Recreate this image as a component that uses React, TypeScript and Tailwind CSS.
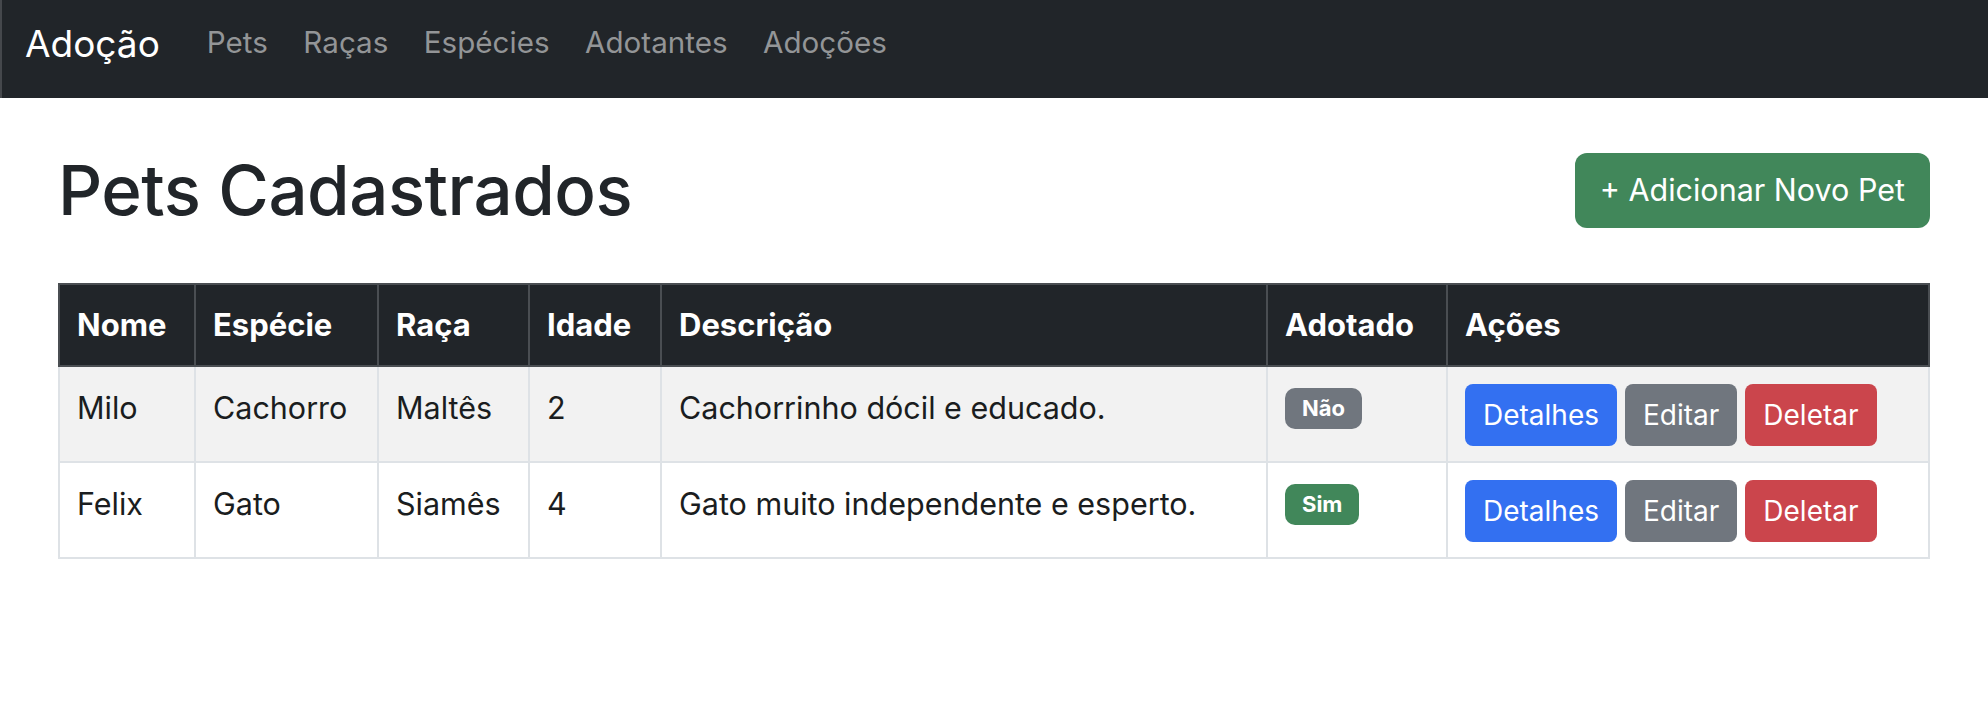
type Pet = {
  nome: string;
  especie: string;
  raca: string;
  idade: number;
  descricao: string;
  adotado: boolean;
};

const pets: Pet[] = [
  { nome: 'Milo', especie: 'Cachorro', raca: 'Maltês', idade: 2, descricao: 'Cachorrinho dócil e educado.', adotado: false },
  { nome: 'Felix', especie: 'Gato', raca: 'Siamês', idade: 4, descricao: 'Gato muito independente e esperto.', adotado: true },
];

const navLinks = ['Pets', 'Raças', 'Espécies', 'Adotantes', 'Adoções'];

const headers = ['Nome', 'Espécie', 'Raça', 'Idade', 'Descrição', 'Adotado', 'Ações'];
const colWidths = ['w-[136px]', 'w-[183px]', 'w-[151px]', 'w-[132px]', 'w-[606px]', 'w-[180px]', 'w-[482px]'];

function Navbar() {
  return (
    <nav className="h-[98px] bg-[#212529] border-l-2 border-[#45484c] flex items-center pb-[12px] pl-[23px]">
      <a className="text-[37px] text-white leading-none">Adoção</a>
      <ul className="flex items-center gap-[35.5px] ml-[47px]">
        {navLinks.map((l) => (
          <li key={l} className="text-[29.6px] text-[#939597] leading-none">
            {l}
          </li>
        ))}
      </ul>
    </nav>
  );
}

function Badge({ adotado }: { adotado: boolean }) {
  return (
    <span
      className={`inline-block rounded-[10px] px-[17px] py-[10px] text-[22px] font-bold leading-[21px] text-white align-[3px] ${
        adotado ? 'bg-[#41875a]' : 'bg-[#70767e]'
      }`}
    >
      {adotado ? 'Sim' : 'Não'}
    </span>
  );
}

function ActionButton({ label, color }: { label: string; color: string }) {
  return (
    <button className={`h-[62px] px-[18px] rounded-[8px] text-[28px] text-white leading-none ${color}`}>
      {label}
    </button>
  );
}

const cell = 'border-2 border-[#dee2e6] px-[17px] pt-[17px] pb-[15px] align-top text-[30.5px] leading-[48px] text-[#1a1d20]';

export default function App() {
  return (
    <div className="min-h-screen bg-white text-[#212529]" style={{ fontFamily: 'Inter, "Noto Sans", sans-serif' }}>
      <Navbar />
      <main className="px-[58px] pt-[48px]">
        <div className="flex items-center justify-between h-[88px]">
          <h1 className="text-[69px] leading-[88px] font-medium tracking-[-0.5px]">Pets Cadastrados</h1>
          <button className="h-[75px] px-[25px] rounded-[12px] bg-[#41875a] text-white text-[30.5px] leading-none">
            + Adicionar Novo Pet
          </button>
        </div>

        <table className="mt-[49px] w-[1872px] table-fixed border-collapse">
          <colgroup>
            {colWidths.map((w, i) => (
              <col key={i} className={w} />
            ))}
          </colgroup>
          <thead>
            <tr className="bg-[#212529] text-white">
              {headers.map((h) => (
                <th
                  key={h}
                  className="border-2 border-[#4a4e52] px-[17px] h-[82px] text-left align-middle text-[31px] font-bold leading-[44px]"
                >
                  {h}
                </th>
              ))}
            </tr>
          </thead>
          <tbody>
            {pets.map((p, i) => (
              <tr key={p.nome} className={i % 2 === 0 ? 'bg-[#f2f2f2]' : 'bg-white'}>
                <td className={cell}>{p.nome}</td>
                <td className={cell}>{p.especie}</td>
                <td className={cell}>{p.raca}</td>
                <td className={cell}>{p.idade}</td>
                <td className={cell}>{p.descricao}</td>
                <td className={cell}>
                  <Badge adotado={p.adotado} />
                </td>
                <td className="border-2 border-[#dee2e6] px-[17px] pt-[17px] pb-[15px] align-top">
                  <div className="flex gap-[8px]">
                    <ActionButton label="Detalhes" color="bg-[#3370f1]" />
                    <ActionButton label="Editar" color="bg-[#70767e]" />
                    <ActionButton label="Deletar" color="bg-[#cb454c]" />
                  </div>
                </td>
              </tr>
            ))}
          </tbody>
        </table>
      </main>
    </div>
  );
}
